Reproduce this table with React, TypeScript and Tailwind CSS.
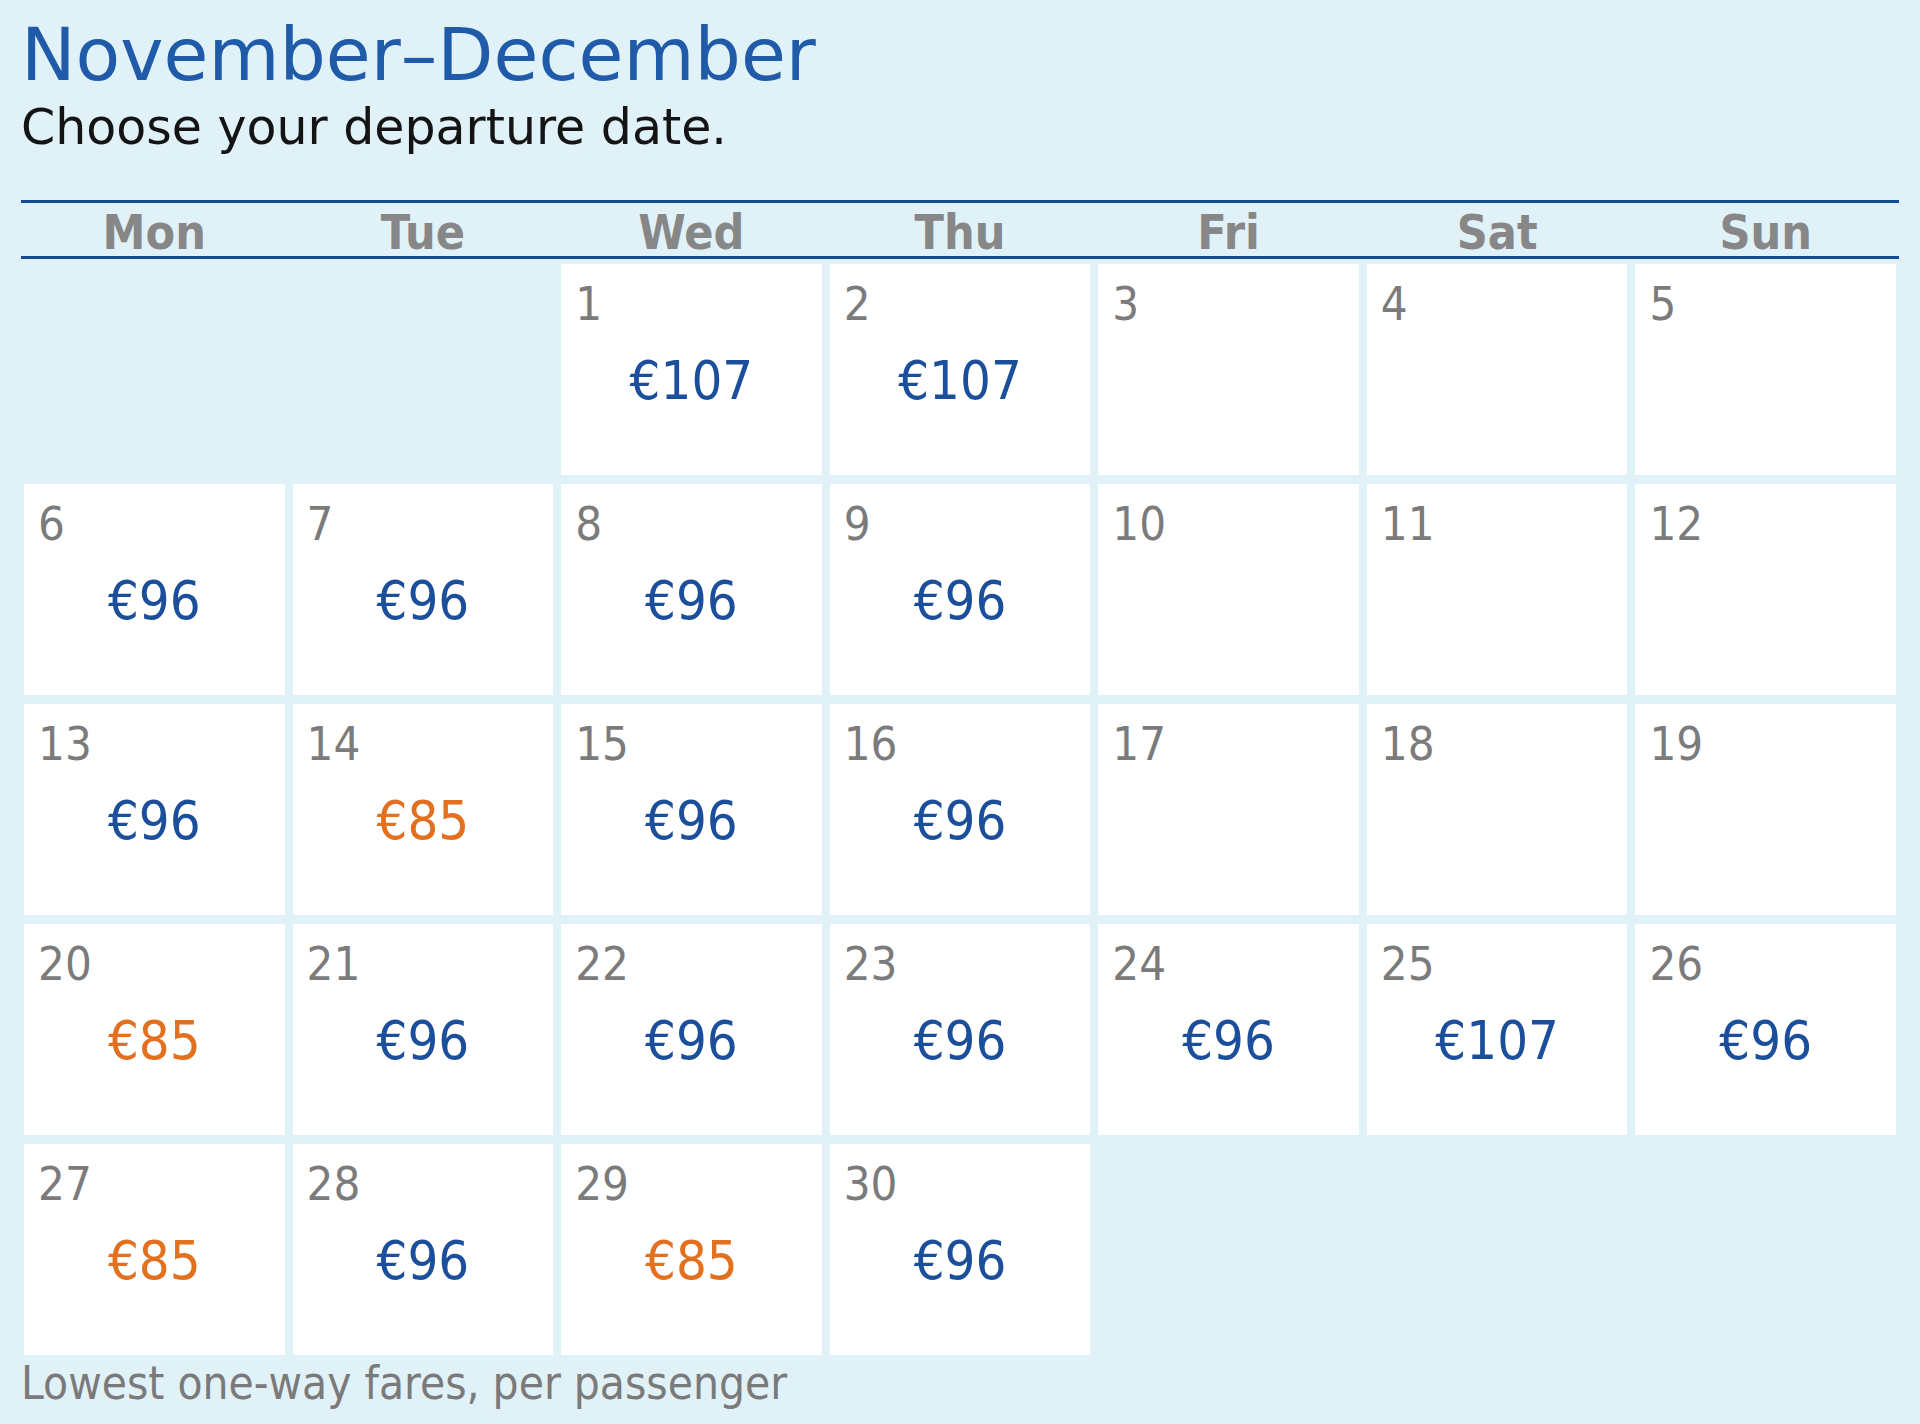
const days = ["Mon", "Tue", "Wed", "Thu", "Fri", "Sat", "Sun"];

type Cell = { day: number; price?: string; low?: boolean } | null;

const cells: Cell[] = [
  null,
  null,
  { day: 1, price: "€107" },
  { day: 2, price: "€107" },
  { day: 3 },
  { day: 4 },
  { day: 5 },
  { day: 6, price: "€96" },
  { day: 7, price: "€96" },
  { day: 8, price: "€96" },
  { day: 9, price: "€96" },
  { day: 10 },
  { day: 11 },
  { day: 12 },
  { day: 13, price: "€96" },
  { day: 14, price: "€85", low: true },
  { day: 15, price: "€96" },
  { day: 16, price: "€96" },
  { day: 17 },
  { day: 18 },
  { day: 19 },
  { day: 20, price: "€85", low: true },
  { day: 21, price: "€96" },
  { day: 22, price: "€96" },
  { day: 23, price: "€96" },
  { day: 24, price: "€96" },
  { day: 25, price: "€107" },
  { day: 26, price: "€96" },
  { day: 27, price: "€85", low: true },
  { day: 28, price: "€96" },
  { day: 29, price: "€85", low: true },
  { day: 30, price: "€96" },
];

const cond = "font-['DejaVu_Sans_Condensed','DejaVu_Sans',sans-serif]";

export default function App() {
  return (
    <div className="min-h-screen w-full bg-[#e1f1f8] px-[21px] pt-[18px] font-['DejaVu_Sans',sans-serif]">
      <h1 className="text-[73px] leading-none text-[#1f5ba8]">November–December</h1>
      <p className="mt-[12px] text-[49px] leading-none text-[#141414]">Choose your departure date.</p>

      <div className="mt-[48px] border-y-[3px] border-[#174b90]">
        <div className="grid h-[53px] grid-cols-7 gap-[8px] px-[3px]">
          {days.map((d) => (
            <div key={d} className={`${cond} pt-[5px] text-center text-[48px] font-bold leading-none text-[#878787]`}>
              {d}
            </div>
          ))}
        </div>
      </div>

      <div className="mt-[5px] grid grid-cols-7 gap-x-[8px] gap-y-[9px] px-[3px]">
        {cells.map((c, i) =>
          c ? (
            <div key={i} className={`${cond} h-[211px] bg-white px-[14px] pt-[16px]`}>
              <div className="text-[47px] leading-none text-[#7b7b7b]">{c.day}</div>
              {c.price && (
                <div
                  className={`mt-[27px] text-center text-[54px] leading-none ${
                    c.low ? "text-[#e2701f]" : "text-[#1b4f9b]"
                  }`}
                >
                  {c.price}
                </div>
              )}
            </div>
          ) : (
            <div key={i} className="h-[211px]" />
          )
        )}
      </div>

      <p className={`${cond} mt-[6px] text-[45.6px] leading-none text-[#7a7a7a]`}>
        Lowest one-way fares, per passenger
      </p>
    </div>
  );
}
